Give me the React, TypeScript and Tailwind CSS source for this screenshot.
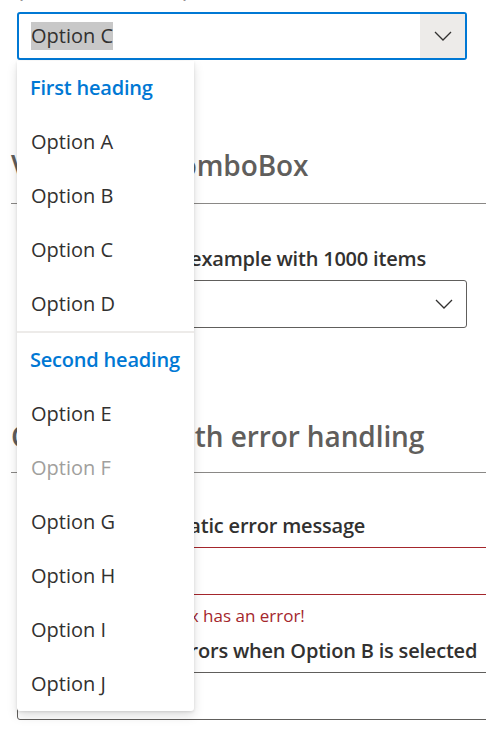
import React from "react";

const Chevron = () => (
  <svg width="18" height="10" viewBox="0 0 18 10" fill="none">
    <path d="M1 1 L9 9 L17 1" stroke="#323130" strokeWidth="1.3" />
  </svg>
);

type Item = { text: string; kind: "header" | "option" | "disabled" | "divider" };

const items: Item[] = [
  { text: "First heading", kind: "header" },
  { text: "Option A", kind: "option" },
  { text: "Option B", kind: "option" },
  { text: "Option C", kind: "option" },
  { text: "Option D", kind: "option" },
  { text: "", kind: "divider" },
  { text: "Second heading", kind: "header" },
  { text: "Option E", kind: "option" },
  { text: "Option F", kind: "disabled" },
  { text: "Option G", kind: "option" },
  { text: "Option H", kind: "option" },
  { text: "Option I", kind: "option" },
  { text: "Option J", kind: "option" },
];

export default function App() {
  return (
    <div
      className="relative h-[733px] w-full overflow-hidden bg-white text-[#323130]"
      style={{ fontFamily: '"Open Sans", "Noto Sans", sans-serif' }}
    >
      <div className="w-[560px] pl-[11px]">
        {/* partially visible label */}
        <div className="-mt-[25px] ml-[6px] h-[30px] whitespace-nowrap text-[20px] font-semibold leading-[30px] tracking-[-0.2px] text-[#323130]">
          (allowFreeform: T)
        </div>
        {/* open combobox */}
        <div className="ml-[6px] mt-[7px] flex h-[48px] w-[450px] rounded-[3px] border-2 border-[#0078d4]">
          <div className="flex flex-1 items-center pl-[12px]">
            <span className="bg-[#c8c8c8] text-[20px] leading-[28px] text-[#323130]">Option C</span>
          </div>
          <div className="flex w-[45px] items-center justify-center bg-[#edebe9]">
            <Chevron />
          </div>
        </div>

        {/* Virtualized section */}
        <div className="mt-[85px] whitespace-nowrap border-b border-[#8a8886] pb-[18px] text-[28px] font-semibold leading-[40px] tracking-[-0.1px] text-[#605e5c]">
          Virtualized ComboBox
        </div>
        <div className="ml-[6px] mt-[40px] h-[30px] whitespace-nowrap text-[20px] font-semibold leading-[30px] tracking-[-0.2px]">
          Scaled/virtualized example with 1000 items
        </div>
        <div className="ml-[6px] mt-[6px] flex h-[48px] w-[450px] items-center rounded-[3px] border border-[#605e5c]">
          <div className="flex-1 pl-[12px] text-[20px]">Option 547</div>
          <div className="flex w-[45px] items-center justify-center">
            <Chevron />
          </div>
        </div>

        {/* Error handling section */}
        <div className="mt-[88px] whitespace-nowrap border-b border-[#8a8886] pb-[16px] text-[28px] font-semibold leading-[40px] tracking-[-0.1px] text-[#605e5c]">
          ComboBox with error handling
        </div>
        <div className="ml-[6px] mt-[38px] h-[30px] whitespace-nowrap text-[20px] font-semibold leading-[30px] tracking-[-0.2px]">
          ComboBox with static error message
        </div>
        <div className="ml-[6px] mt-[6px] flex h-[48px] w-[540px] items-center rounded-[3px] border border-[#a4262c]">
          <div className="flex-1 pl-[12px]" />
        </div>
        <div className="ml-[6px] mt-[9px] h-[24px] whitespace-nowrap text-[17px] leading-[24px] text-[#a4262c]">
          Oh no! This ComboBox has an error!
        </div>
        <div className="ml-[6px] mt-[8px] h-[30px] whitespace-nowrap text-[20px] font-semibold leading-[30px] tracking-[-0.2px]">
          ComboBox that errors when Option B is selected
        </div>
        <div className="ml-[6px] mt-[6px] flex h-[48px] w-[540px] items-center rounded-[3px] border border-[#605e5c]" />
      </div>

      {/* dropdown callout */}
      <div className="absolute left-[17px] top-[61px] w-[177px] rounded-b-[3px] bg-white shadow-[0_5px_11px_rgba(0,0,0,0.13),0_1px_3px_rgba(0,0,0,0.11)]">
        {items.map((it, i) =>
          it.kind === "divider" ? (
            <div key={i} className="h-[2px] bg-[#edebe9]" />
          ) : (
            <div
              key={i}
              className={
                it.kind === "header"
                  ? "flex h-[54px] items-center whitespace-nowrap pl-[13px] text-[20px] font-semibold tracking-[-0.2px] text-[#0078d4]"
                  : it.kind === "disabled"
                  ? "flex h-[54px] items-center whitespace-nowrap pl-[14px] text-[20px] text-[#a19f9d]"
                  : "flex h-[54px] items-center whitespace-nowrap pl-[14px] text-[20px] text-[#323130]"
              }
            >
              {it.text}
            </div>
          )
        )}
      </div>
    </div>
  );
}
